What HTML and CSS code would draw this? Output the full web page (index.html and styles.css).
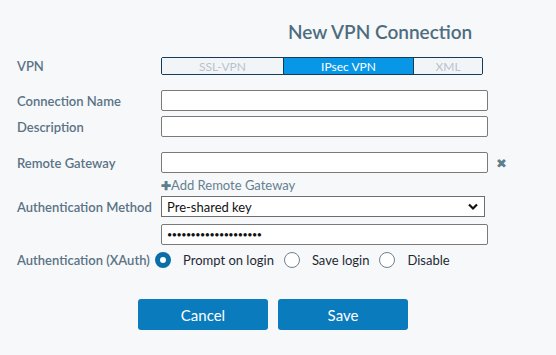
FILE: index.html
```html
<!DOCTYPE html>
<html lang="en">
<head>
    <meta charset="UTF-8">
    <title>New VPN Connection</title>
    <link rel="stylesheet" href="styles.css">
</head>
<body>
    <div class="dialog">
        <h1 class="title">New VPN Connection</h1>

        <div class="row row-vpn">
            <label class="label">VPN</label>
            <div class="seg">
                <span class="seg-item seg-ssl">SSL-VPN</span>
                <span class="seg-item seg-ipsec active">IPsec VPN</span>
                <span class="seg-item seg-xml">XML</span>
            </div>
        </div>

        <div class="row row-gap">
            <label class="label" for="connName">Connection Name</label>
            <input type="text" id="connName" class="field">
        </div>
        <div class="row row-tight">
            <label class="label" for="desc">Description</label>
            <input type="text" id="desc" class="field">
        </div>

        <div class="row row-gap">
            <label class="label" for="gateway">Remote Gateway</label>
            <input type="text" id="gateway" class="field">
            <span class="remove">&#x2716;</span>
        </div>
        <div class="row row-link">
            <span class="label"></span>
            <a class="add-link"><span class="plus">&#x271A;</span>Add Remote Gateway</a>
        </div>

        <div class="row row-select">
            <label class="label" for="authMethod">Authentication Method</label>
            <div class="select">
                <span>Pre-shared key</span>
                <svg class="chevron" width="10" height="8" viewBox="0 0 10 8"><path d="M1 1.5 L5 5.5 L9 1.5" fill="none" stroke="#111" stroke-width="2.2"/></svg>
            </div>
        </div>
        <div class="row row-pass">
            <span class="label"></span>
            <input type="password" class="field" value="••••••••••••••••••••">
        </div>

        <div class="row row-radio">
            <span class="label">Authentication (XAuth)</span>
            <div class="radios">
                <span class="radio checked"></span><span class="radio-text">Prompt on login</span>
                <span class="radio"></span><span class="radio-text">Save login</span>
                <span class="radio"></span><span class="radio-text">Disable</span>
            </div>
        </div>

        <div class="actions">
            <button class="btn">Cancel</button>
            <button class="btn">Save</button>
        </div>
    </div>
</body>
</html>
```

FILE: styles.css
```css
body {
    margin: 0;
    padding: 0;
    background: #f7f8fa;
    font-family: Lato, "Open Sans", sans-serif;
    color: #222;
}
.dialog {
    padding: 0 17px;
}
.title {
    margin: 0;
    padding: 20px 0 0 271px;
    font-size: 19px;
    line-height: 24px;
    font-weight: 600;
    color: #4d6d7f;
}
.row {
    display: flex;
    align-items: center;
}
.label {
    width: 144px;
    flex: none;
    font-size: 13px;
    font-weight: 600;
    color: #5a7385;
}
.row-vpn {
    margin-top: 13px;
    height: 18px;
}
.row-gap {
    margin-top: 15px;
}
.row-tight {
    margin-top: 5px;
}
.row-link {
    margin-top: 2px;
    height: 20px;
}
.row-select {
    margin-top: 1px;
}
.row-pass {
    margin-top: 7px;
}
.row-radio {
    margin-top: 6px;
    height: 18px;
}
.seg {
    display: flex;
    width: 322px;
    height: 18px;
    box-sizing: border-box;
    border: 1px solid #173a58;
    border-radius: 2px;
    overflow: hidden;
    font-size: 12px;
}
.seg-item {
    display: flex;
    align-items: center;
    justify-content: center;
    background: #f2f5f8;
    color: #b6c3cc;
}
.seg-ssl {
    width: 121px;
    border-right: 1px solid #173a58;
}
.seg-ipsec {
    width: 129px;
}
.seg-xml {
    flex: 1;
    border-left: 1px solid #173a58;
}
.seg-item.active {
    background: #0897e6;
    color: #ffffff;
}
.field {
    width: 327px;
    height: 21px;
    box-sizing: border-box;
    margin: 0;
    padding: 0 5px;
    border: 1px solid #7a7a7a;
    border-radius: 2px;
    background: #ffffff;
    font-family: Lato, sans-serif;
    font-size: 12px;
}
.remove {
    margin-left: 8px;
    font-size: 13px;
    color: #5f7d8c;
}
.add-link {
    font-size: 13px;
    color: #64808f;
}
.plus {
    font-size: 12px;
    font-weight: 700;
    color: #5f7d8c;
}
.select {
    display: flex;
    align-items: center;
    justify-content: space-between;
    width: 324px;
    height: 21px;
    box-sizing: border-box;
    padding: 0 6px 0 5px;
    border: 1px solid #6e6e6e;
    background: #ffffff;
    font-size: 13px;
    color: #111;
}
.row-pass .field {
    font-size: 9px;
    letter-spacing: -0.5px;
    color: #111;
}
.radios {
    display: flex;
    align-items: center;
    font-size: 13px;
    color: #1e2a33;
    margin-left: -6px;
}
.radio {
    width: 16px;
    height: 16px;
    box-sizing: border-box;
    border: 1px solid #6c8393;
    border-radius: 50%;
    background: #ffffff;
}
.radio.checked {
    border: 5px solid #0a6fa6;
}
.radio-text {
    margin: 0 10px 0 12px;
}
.actions {
    display: flex;
    justify-content: center;
    gap: 10px;
    margin-top: 30px;
    padding-right: 10px;
}
.btn {
    width: 130px;
    height: 31px;
    border: none;
    border-radius: 3px;
    background: #0a7bbd;
    color: #ffffff;
    font-family: Lato, sans-serif;
    font-size: 15px;
}
```
